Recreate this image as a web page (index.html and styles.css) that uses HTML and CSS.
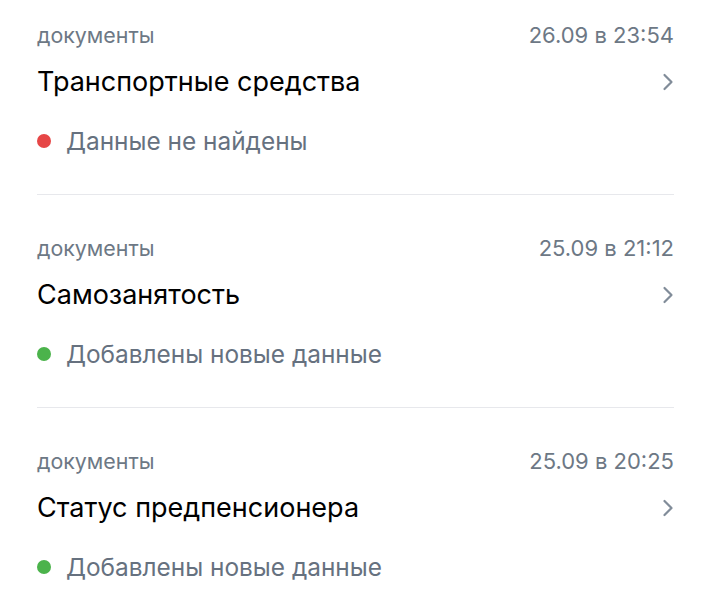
FILE: index.html
```html
<!DOCTYPE html>
<html lang="ru">
<head>
<meta charset="utf-8">
<link rel="stylesheet" href="styles.css">
</head>
<body>
<div class="list">
  <div class="item">
    <div class="meta"><span class="caption">документы</span><span class="date">26.09 в 23:54</span></div>
    <div class="title-row"><span class="title">Транспортные средства</span>
      <svg class="chev" width="12" height="18" viewBox="0 0 12 18"><path d="M2.5 2 L9.5 9 L2.5 16" fill="none" stroke="#818c99" stroke-width="2.2" stroke-linecap="round" stroke-linejoin="round"/></svg></div>
    <div class="status"><span class="dot red"></span><span>Данные не найдены</span></div>
  </div>
  <div class="item">
    <div class="meta"><span class="caption">документы</span><span class="date">25.09 в 21:12</span></div>
    <div class="title-row"><span class="title">Самозанятость</span>
      <svg class="chev" width="12" height="18" viewBox="0 0 12 18"><path d="M2.5 2 L9.5 9 L2.5 16" fill="none" stroke="#818c99" stroke-width="2.2" stroke-linecap="round" stroke-linejoin="round"/></svg></div>
    <div class="status"><span class="dot green"></span><span>Добавлены новые данные</span></div>
  </div>
  <div class="item">
    <div class="meta"><span class="caption">документы</span><span class="date">25.09 в 20:25</span></div>
    <div class="title-row"><span class="title">Статус предпенсионера</span>
      <svg class="chev" width="12" height="18" viewBox="0 0 12 18"><path d="M2.5 2 L9.5 9 L2.5 16" fill="none" stroke="#818c99" stroke-width="2.2" stroke-linecap="round" stroke-linejoin="round"/></svg></div>
    <div class="status"><span class="dot green"></span><span>Добавлены новые данные</span></div>
  </div>
</div>
</body>
</html>
```
FILE: styles.css
```css
html, body {
  margin: 0;
  padding: 0;
  background: #ffffff;
}
body {
  font-family: Inter, "Noto Sans", sans-serif;
  overflow: hidden;
}
.list {
  padding: 0 37px;
}
.item {
  padding: 41px 0 39px;
  border-bottom: 1px solid #e7e8ec;
  display: flex;
  flex-direction: column;
}
.item:first-child {
  padding-top: 23px;
}
.meta {
  display: flex;
  justify-content: space-between;
  align-items: center;
  height: 24px;
  line-height: 24px;
  font-size: 21.4px;
  color: #6d7885;
}
.date {
  font-size: 22px;
}
.title-row {
  margin-top: 19px;
  display: flex;
  justify-content: space-between;
  align-items: center;
  height: 32px;
}
.title {
  font-size: 27px;
  line-height: 32px;
  color: #000000;
}
.status {
  margin-top: 29px;
  height: 28px;
  line-height: 28px;
  display: flex;
  align-items: center;
  gap: 15px;
  font-size: 24.4px;
  color: #66717f;
}
.dot {
  width: 14px;
  height: 14px;
  border-radius: 50%;
  flex: none;
}
.red { background: #e64646; }
.green { background: #4bb34b; }
```
